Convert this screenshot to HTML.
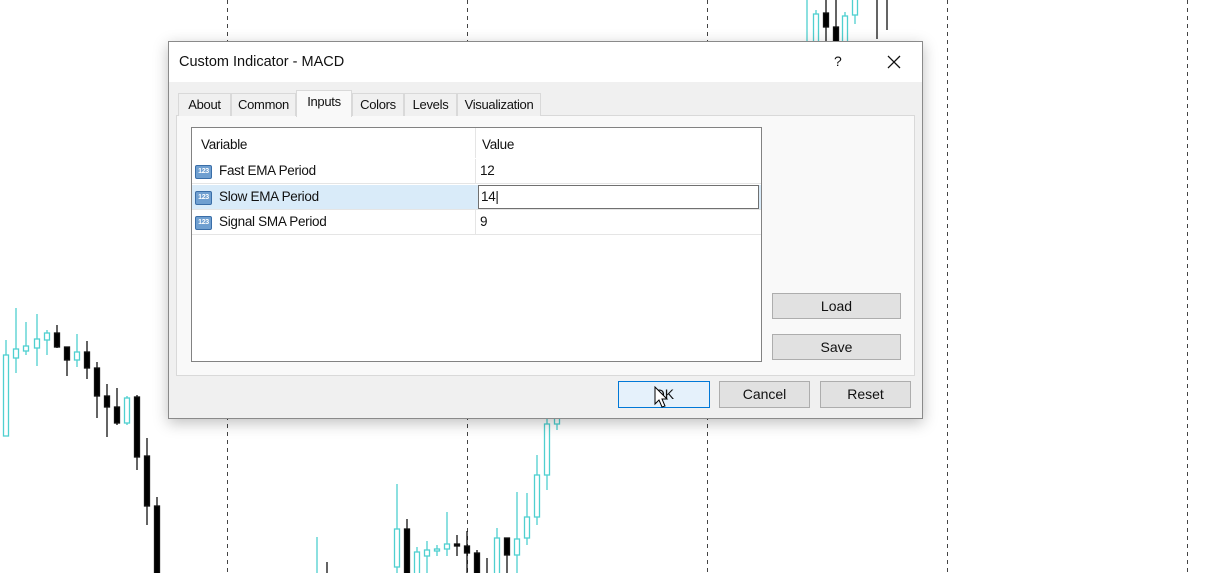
<!DOCTYPE html>
<html><head><meta charset="utf-8"><style>
*{margin:0;padding:0;box-sizing:border-box}
body{width:1227px;height:573px;overflow:hidden;background:#fff;position:relative;font-family:"Liberation Sans",sans-serif;font-size:13px;color:#111}
.abs{position:absolute}
.dlg{left:168px;top:41px;width:755px;height:378px;background:#f0f0f0;border:1px solid #8a8a8a;box-shadow:0 4px 14px rgba(0,0,0,.25)}
.title{left:0;top:0;width:753px;height:40px;background:#fff}
.tab{top:51px;height:23px;border:1px solid #d9d9d9;border-bottom:none;background:#f0f0f0;font-size:13px;line-height:22px;text-align:center;letter-spacing:-.3px}
.btn{background:#e1e1e1;border:1px solid #adadad;text-align:center;line-height:24px;font-size:14px}
.row{left:1px;width:569px;height:25px;border-bottom:1px solid #e5e5e5;font-size:13.5px;line-height:24px;letter-spacing:-.3px}
.ic{position:absolute;left:3px;top:6px;width:17px;height:14px;background:#6f9fd0;border:1px solid #3a6ea8;border-radius:2px;color:#fff;font-size:7px;line-height:12px;text-align:center;font-weight:bold}
</style></head><body>
<svg class="abs" style="left:0;top:0" width="1227" height="573">
<g stroke="#444" stroke-width="1" stroke-dasharray="4,4">
<line x1="227.5" y1="0" x2="227.5" y2="573"/><line x1="467.5" y1="0" x2="467.5" y2="573"/><line x1="707.5" y1="0" x2="707.5" y2="573"/><line x1="947.5" y1="0" x2="947.5" y2="573"/><line x1="1187.5" y1="0" x2="1187.5" y2="573"/>
</g>
<g stroke="#4fd0d0" stroke-width="1.3" fill="#fff">
<line x1="6" y1="340" x2="6" y2="436"/><rect x="3.5" y="355" width="5" height="81"/>
<line x1="16" y1="308" x2="16" y2="373"/><rect x="13.5" y="349" width="5" height="9"/>
<line x1="26" y1="322" x2="26" y2="355"/><rect x="23.5" y="346" width="5" height="5"/>
<line x1="37" y1="314" x2="37" y2="366"/><rect x="34.5" y="339" width="5" height="9"/>
<line x1="47" y1="330" x2="47" y2="355"/><rect x="44.5" y="333" width="5" height="7"/>
<line x1="77" y1="334" x2="77" y2="367"/><rect x="74.5" y="352" width="5" height="8"/>
<line x1="127" y1="396" x2="127" y2="425"/><rect x="124.5" y="398" width="5" height="25"/>
<line x1="317" y1="537" x2="317" y2="573"/>
<line x1="397" y1="484" x2="397" y2="573"/><rect x="394.5" y="529" width="5" height="38"/>
<line x1="417" y1="547" x2="417" y2="573"/><rect x="414.5" y="552" width="5" height="22"/>
<line x1="427" y1="541" x2="427" y2="573"/><rect x="424.5" y="550" width="5" height="6"/>
<line x1="437" y1="545" x2="437" y2="556"/><rect x="434.5" y="549" width="5" height="2"/>
<line x1="447" y1="512" x2="447" y2="556"/><rect x="444.5" y="544" width="5" height="5"/>
<line x1="497" y1="528" x2="497" y2="573"/><rect x="494.5" y="538" width="5" height="36"/>
<line x1="517" y1="492" x2="517" y2="573"/><rect x="514.5" y="539" width="5" height="16"/>
<line x1="527" y1="493" x2="527" y2="545"/><rect x="524.5" y="517" width="5" height="21"/>
<line x1="537" y1="455" x2="537" y2="525"/><rect x="534.5" y="475" width="5" height="42"/>
<line x1="547" y1="390" x2="547" y2="490"/><rect x="544.5" y="424" width="5" height="51"/>
<line x1="557" y1="410" x2="557" y2="430"/><rect x="554.5" y="418" width="5" height="6"/>
<line x1="807" y1="0" x2="807" y2="42"/>
<line x1="816" y1="10" x2="816" y2="42"/><rect x="813.5" y="14" width="5" height="28"/>
<line x1="845" y1="12" x2="845" y2="42"/><rect x="842.5" y="16" width="5" height="26"/>
<line x1="855" y1="0" x2="855" y2="24"/><rect x="852.5" y="-2" width="5" height="17"/>
</g>
<g stroke="#111" stroke-width="1.3" fill="#000">
<line x1="57" y1="325" x2="57" y2="348"/><rect x="54.5" y="333" width="5" height="14"/>
<line x1="67" y1="347" x2="67" y2="376"/><rect x="64.5" y="347" width="5" height="13"/>
<line x1="87" y1="341" x2="87" y2="379"/><rect x="84.5" y="352" width="5" height="16"/>
<line x1="97" y1="362" x2="97" y2="418"/><rect x="94.5" y="368" width="5" height="28"/>
<line x1="107" y1="384" x2="107" y2="437"/><rect x="104.5" y="396" width="5" height="11"/>
<line x1="117" y1="388" x2="117" y2="425"/><rect x="114.5" y="407" width="5" height="16"/>
<line x1="137" y1="395" x2="137" y2="470"/><rect x="134.5" y="397" width="5" height="60"/>
<line x1="147" y1="438" x2="147" y2="525"/><rect x="144.5" y="456" width="5" height="50"/>
<line x1="157" y1="497" x2="157" y2="573"/><rect x="154.5" y="506" width="5" height="70"/>
<line x1="327" y1="562" x2="327" y2="573"/>
<line x1="407" y1="519" x2="407" y2="573"/><rect x="404.5" y="529" width="5" height="45"/>
<line x1="457" y1="535" x2="457" y2="556"/><rect x="454.5" y="544" width="5" height="2"/>
<line x1="467" y1="531" x2="467" y2="573"/><rect x="464.5" y="546" width="5" height="7"/>
<line x1="477" y1="550" x2="477" y2="573"/><rect x="474.5" y="553" width="5" height="21"/>
<line x1="487" y1="558" x2="487" y2="573"/>
<line x1="507" y1="538" x2="507" y2="573"/><rect x="504.5" y="538" width="5" height="17"/>
<line x1="826" y1="0" x2="826" y2="42"/><rect x="823.5" y="13" width="5" height="14"/>
<line x1="836" y1="0" x2="836" y2="42"/><rect x="833.5" y="27" width="5" height="15"/>
<line x1="877" y1="0" x2="877" y2="39"/><line x1="887" y1="0" x2="887" y2="30"/>
</g>
</svg>
<div class="abs dlg">
 <div class="abs title"></div>
 <div class="abs" style="left:10px;top:12px;font-size:14.5px">Custom Indicator - MACD</div>
 <div class="abs" style="left:665px;top:11px;font-size:14px">?</div>
 <svg class="abs" style="left:717px;top:12px" width="16" height="16"><path d="M2 2L14 14M14 2L2 14" stroke="#111" stroke-width="1.3"/></svg>
 <div class="abs" style="left:7px;top:73px;width:739px;height:261px;border:1px solid #d9d9d9;background:#f9f9f9"></div>
 <div class="abs tab" style="left:9px;width:53px">About</div>
 <div class="abs tab" style="left:62px;width:65px">Common</div>
 <div class="abs tab" style="left:127px;top:48px;height:27px;width:56px;background:#f9f9f9;line-height:22px">Inputs</div>
 <div class="abs tab" style="left:183px;width:52px">Colors</div>
 <div class="abs tab" style="left:235px;width:53px">Levels</div>
 <div class="abs tab" style="left:288px;width:84px">Visualization</div>
 <div class="abs" style="left:22px;top:85px;width:571px;height:235px;border:1px solid #828282;background:#fff">
  <div class="abs" style="left:0;top:0;width:569px;height:31px;font-size:13.5px;line-height:34px;letter-spacing:-.3px"><span class="abs" style="left:9px">Variable</span><span class="abs" style="left:290px">Value</span></div>
  <div class="abs" style="left:283px;top:0;width:1px;height:30px;background:#e5e5e5"></div>
  <div class="abs row" style="top:31px;left:0"><span class="ic">123</span><span class="abs" style="left:27px">Fast EMA Period</span><span class="abs" style="left:283px;top:0;width:1px;height:25px;background:#e5e5e5"></span><span class="abs" style="left:288px">12</span></div>
  <div class="abs row" style="top:57px;left:0;background:#d9ebf9"><span class="ic">123</span><span class="abs" style="left:27px">Slow EMA Period</span><span class="abs" style="left:286px;top:0;width:281px;height:24px;background:#fff;border:1px solid #707070;padding-left:2px;line-height:22px">14|</span></div>
  <div class="abs row" style="top:82px;left:0"><span class="ic">123</span><span class="abs" style="left:27px">Signal SMA Period</span><span class="abs" style="left:283px;top:0;width:1px;height:25px;background:#e5e5e5"></span><span class="abs" style="left:288px">9</span></div>
 </div>
 <div class="abs btn" style="left:603px;top:251px;width:129px;height:26px">Load</div>
 <div class="abs btn" style="left:603px;top:292px;width:129px;height:26px">Save</div>
 <div class="abs btn" style="left:449px;top:339px;width:92px;height:27px;background:#e5f1fb;border-color:#0078d7">OK</div>
 <div class="abs btn" style="left:550px;top:339px;width:91px;height:27px">Cancel</div>
 <div class="abs btn" style="left:651px;top:339px;width:91px;height:27px">Reset</div>
 <svg class="abs" style="left:485px;top:344px" width="16" height="24"><path d="M1 1L1 18L5 14L8 21L11 20L8 13L13 13Z" fill="#fff" stroke="#000" stroke-width="1"/></svg>
</div>
</body></html>
